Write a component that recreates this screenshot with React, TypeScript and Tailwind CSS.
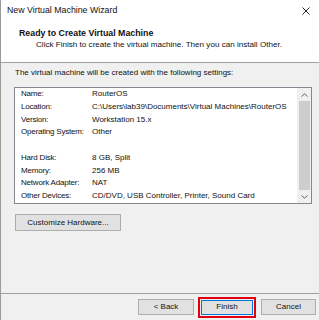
import React from 'react';

type Row = { label: string; value: string } | null;

const rows: Row[] = [
  { label: 'Name:', value: 'RouterOS' },
  { label: 'Location:', value: 'C:\\Users\\lab39\\Documents\\Virtual Machines\\RouterOS' },
  { label: 'Version:', value: 'Workstation 15.x' },
  { label: 'Operating System:', value: 'Other' },
  null,
  { label: 'Hard Disk:', value: '8 GB, Split' },
  { label: 'Memory:', value: '256 MB' },
  { label: 'Network Adapter:', value: 'NAT' },
  { label: 'Other Devices:', value: 'CD/DVD, USB Controller, Printer, Sound Card' },
];

export default function App() {
  return (
    <div
      className="w-[319px] h-[320px] flex flex-col overflow-hidden border-l border-[#9a9a9a] bg-[#f0f0f0] text-[8px] text-[#111]"
      style={{ fontFamily: '"Liberation Sans", Arial, sans-serif' }}
    >
      {/* Title bar */}
      <div className="h-[22px] shrink-0 bg-white flex items-center justify-between pl-[6px] pr-[9px] text-[8.8px]">
        <span>New Virtual Machine Wizard</span>
        <svg width="8" height="8" viewBox="0 0 8 8" className="text-[#111]">
          <path d="M0.5 0.5L7.5 7.5M7.5 0.5L0.5 7.5" stroke="currentColor" strokeWidth="0.9" />
        </svg>
      </div>

      {/* Header */}
      <div className="h-[41px] shrink-0 bg-white border-b border-[#a0a0a0] pt-[5px] pl-[18px] leading-[12px]">
        <div className="font-bold text-[8.8px]">Ready to Create Virtual Machine</div>
        <div className="pl-[17px] text-[8.1px]">Click Finish to create the virtual machine. Then you can install Other.</div>
      </div>

      {/* Body */}
      <div className="flex-1 pl-[13px] pt-[4px]">
        <div className="leading-[12px] pl-[1px]">The virtual machine will be created with the following settings:</div>

        <div className="mt-[8px] w-[298px] h-[117px] bg-white border border-[#828790] flex">
          <div className="flex-1 pl-[6px]">
            {rows.map((row, i) =>
              row ? (
                <div key={i} className="h-[12.75px] leading-[12.75px] flex whitespace-nowrap">
                  <span className="w-[71px] shrink-0 tracking-[-0.2px]">{row.label}</span>
                  <span>{row.value}</span>
                </div>
              ) : (
                <div key={i} className="h-[12.75px]" />
              )
            )}
          </div>
          {/* Scrollbar */}
          <div className="w-[14px] shrink-0 bg-[#f0f0f0] flex flex-col items-center">
            <div className="h-[13px] w-full flex items-center justify-center">
              <svg width="7" height="4" viewBox="0 0 7 4">
                <path d="M0.5 3.5L3.5 0.8L6.5 3.5" fill="none" stroke="#606060" strokeWidth="1" />
              </svg>
            </div>
            <div className="w-[11px] flex-1 bg-[#cdcdcd]" />
            <div className="h-[13px] w-full flex items-center justify-center">
              <svg width="7" height="4" viewBox="0 0 7 4">
                <path d="M0.5 0.5L3.5 3.2L6.5 0.5" fill="none" stroke="#606060" strokeWidth="1" />
              </svg>
            </div>
          </div>
        </div>

        <button className="mt-[10px] ml-[1px] w-[106px] h-[17px] bg-[#e1e1e1] border border-[#adadad] flex items-center justify-center leading-none">
          Customize Hardware...
        </button>
      </div>

      {/* Footer */}
      <div className="h-[27px] shrink-0 border-t border-[#a0a0a0] flex items-center pl-[137px]">
        <button className="w-[56px] h-[16px] bg-[#e1e1e1] border border-[#adadad] flex items-center justify-center leading-none">
          &lt; Back
        </button>
        <div className="ml-[4px] w-[58px] h-[21px] border-2 border-[#e3000f] p-[1px]">
          <button className="w-full h-full bg-[#e1e1e1] border border-[#0078d7] flex items-center justify-center leading-none">
            Finish
          </button>
        </div>
        <button className="ml-[5px] w-[55px] h-[16px] bg-[#e1e1e1] border border-[#adadad] flex items-center justify-center leading-none">
          Cancel
        </button>
      </div>
    </div>
  );
}
